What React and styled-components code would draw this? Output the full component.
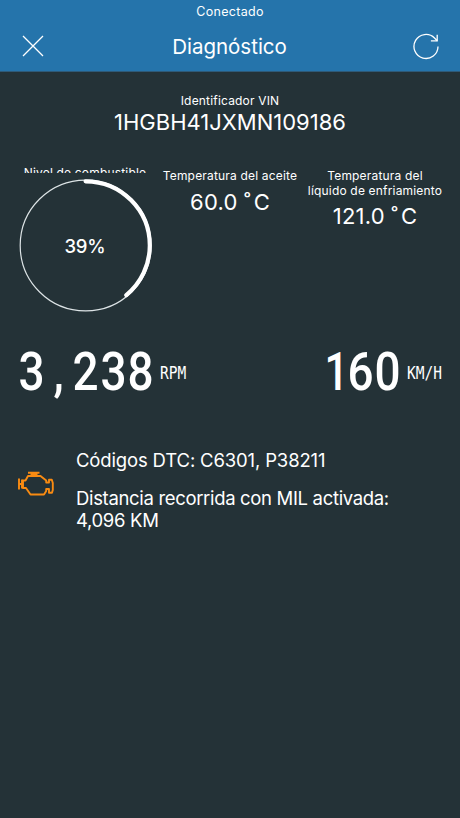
import React from "react";
import styled, { createGlobalStyle } from "styled-components";

const GlobalStyle = createGlobalStyle`
  * { box-sizing: border-box; }
  body { margin: 0; background: #243237; }
`;

const Screen = styled.div`
  width: 460px;
  height: 818px;
  overflow: hidden;
  background: #243237;
  color: #fff;
  font-family: Inter, "Liberation Sans", sans-serif;
`;

const Header = styled.header`
  height: 72px;
  background: #2574ab;
  border-bottom: 1px solid #2e5a78;
`;

const Status = styled.div`
  height: 23px;
  line-height: 24px;
  text-align: center;
  font-size: 12.5px;
  letter-spacing: 0.3px;
`;

const NavBar = styled.nav`
  height: 46px;
  display: grid;
  grid-template-columns: 66px 1fr 68px;
  align-items: center;
  justify-items: center;
`;

const Title = styled.h1`
  margin: 0;
  padding-left: 1px;
  font-size: 20.5px;
  font-weight: 400;
  letter-spacing: 0;
`;

const IconButton = styled.button`
  display: flex;
  padding: 0;
  border: 0;
  background: none;
  color: #fff;
`;

const VinSection = styled.section`
  height: 94px;
  padding-top: 21px;
  text-align: center;
`;

const Label = styled.div`
  font-size: 12px;
  line-height: 15px;
  letter-spacing: 0.18px;
  white-space: nowrap;
`;

const Vin = styled.div`
  font-size: 22px;
  line-height: 28px;
  letter-spacing: 0;
`;

const Gauges = styled.section`
  height: 182px;
  display: grid;
  grid-template-columns: 157px 146px 144px;
`;

const FuelGauge = styled.div`
  padding-left: 14px;
`;

const ClippedLabel = styled.div`
  width: 142px;
  height: 7px;
  margin-bottom: 1px;
  overflow: hidden;
  display: flex;
  justify-content: center;
  align-items: flex-start;

  > * { margin-top: -1px; }
`;

const Ring = styled.div`
  display: grid;
  width: 142px;
  height: 142px;

  > * { grid-area: 1 / 1; place-self: center; }
`;

const Percent = styled.span`
  padding-top: 1px;
  font-size: 18.5px;
  font-weight: 500;
  letter-spacing: -0.2px;
`;

const Reading = styled.div`
  display: flex;
  flex-direction: column;
  align-items: center;
  text-align: center;
  padding-top: 2px;
`;

const Value = styled.div`
  margin-top: ${(p) => (p.$tight ? 4 : 5)}px;
  font-size: 22px;
  line-height: 28px;
  letter-spacing: 0.2px;
  white-space: pre;
`;

const Degree = styled.span`
  margin-right: 3px;
`;

const Meters = styled.section`
  height: 52px;
  padding: 0 18px;
  display: flex;
  justify-content: space-between;
`;

const Meter = styled.div`
  display: flex;
  align-items: center;
`;

const Digits = styled.span`
  display: flex;
  height: 50px;
  font-family: Roboto, "Liberation Sans", sans-serif;
  font-size: 54px;
  font-weight: 500;
  line-height: 45px;
`;

const Digit = styled.span`
  width: 27.2px;
  display: flex;
  justify-content: center;
  transform: scaleX(0.85);
`;

/* The "1" is drawn narrow and sits close to the digit after it. */
const NarrowDigit = styled(Digit)`
  width: 25px;
  padding-left: 5px;
  transform: scaleX(0.78);
`;

const Unit = styled.span`
  margin-left: 6px;
  padding-bottom: 2px;
  font-family: "DejaVu Sans Mono", monospace;
  font-size: 14.5px;
  transform: scaleY(1.25);
`;

const Alerts = styled.section`
  padding: 49px 18px 0;
  display: grid;
  grid-template-columns: 36px 1fr;
  column-gap: 22px;
  align-items: start;
`;

const AlertIcon = styled.div`
  padding-top: 22px;
`;

const AlertText = styled.p`
  margin: 0 0 15px;
  font-size: 18.5px;
  line-height: 22.5px;
  letter-spacing: ${(p) => (p.$condensed ? -0.33 : -0.15)}px;
`;

const Messages = styled.div``;

const CloseIcon = () => (
  <svg width="22" height="22" viewBox="0 0 22 22" fill="none" stroke="currentColor" strokeWidth="1.3">
    <path d="M1 1 21 21M21 1 1 21" />
  </svg>
);

const RefreshIcon = () => (
  <svg width="28" height="28" viewBox="0 0 28 28" fill="none" stroke="currentColor" strokeWidth="1.3">
    <path d="M26 14.5A12 12 0 1 1 22.5 6L25.2 8.8" />
    <path d="M25.2 2.7V8.8H18.9" />
  </svg>
);

const EngineIcon = () => (
  <svg width="36" height="26" viewBox="0 0 36 26" fill="none" stroke="#f98b12" strokeWidth="1.9" strokeLinejoin="round">
    <path d="M10 1.8H21.5M12.5 3.2H19.5M1 7.5V18.5M4 8.5V17.5M1 13H5" />
    <path d="M5 9.5V17H8L12.5 23.5H26L28.2 20V18H31V21.8H34L34.8 19V12L33.8 8.8H31V11.5H28.2V9.5L22.5 5H10L7.5 9.5H5Z" />
  </svg>
);

function FuelRing({ value }) {
  const r = 64.2;
  const c = 2 * Math.PI * r;
  return (
    <Ring>
      <svg width="142" height="142" viewBox="0 0 142 142" fill="none">
        <circle cx="71.6" cy="71.5" r="65.4" stroke="#dde4e6" strokeWidth="1.2" />
        <circle
          cx="71.6" cy="71.5" r={r} stroke="#fff" strokeWidth="4.2" strokeLinecap="round"
          strokeDasharray={`${(c * value) / 100} ${c}`} transform="rotate(-90 71.6 71.5)"
        />
      </svg>
      <Percent>{value}%</Percent>
    </Ring>
  );
}

function MeterReadout({ value, unit }) {
  return (
    <Meter>
      <Digits>
        {value.split("").map((ch, i) => {
          const Cell = ch === "1" ? NarrowDigit : Digit;
          return <Cell key={i}>{ch}</Cell>;
        })}
      </Digits>
      <Unit>{unit}</Unit>
    </Meter>
  );
}

export default function App() {
  return (
    <Screen>
      <GlobalStyle />
      <Header>
        <Status>Conectado</Status>
        <NavBar>
          <IconButton aria-label="Cerrar"><CloseIcon /></IconButton>
          <Title>Diagnóstico</Title>
          <IconButton aria-label="Actualizar"><RefreshIcon /></IconButton>
        </NavBar>
      </Header>
      <VinSection>
        <Label>Identificador VIN</Label>
        <Vin>1HGBH41JXMN109186</Vin>
      </VinSection>
      <Gauges>
        <FuelGauge>
          <ClippedLabel><Label>Nivel de combustible</Label></ClippedLabel>
          <FuelRing value={39} />
        </FuelGauge>
        <Reading>
          <Label>Temperatura del aceite</Label>
          <Value>60.0 <Degree>˚</Degree>C</Value>
        </Reading>
        <Reading>
          <Label>Temperatura del<br />líquido de enfriamiento</Label>
          <Value $tight>121.0 <Degree>˚</Degree>C</Value>
        </Reading>
      </Gauges>
      <Meters>
        <MeterReadout value="3,238" unit="RPM" />
        <MeterReadout value="160" unit="KM/H" />
      </Meters>
      <Alerts>
        <AlertIcon><EngineIcon /></AlertIcon>
        <Messages>
          <AlertText>Códigos DTC: C6301, P38211</AlertText>
          <AlertText $condensed>Distancia recorrida con MIL activada:<br />4,096 KM</AlertText>
        </Messages>
      </Alerts>
    </Screen>
  );
}
